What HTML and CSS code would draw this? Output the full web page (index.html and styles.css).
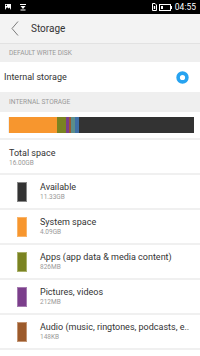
FILE: index.html
```html
<!DOCTYPE html>
<html>
<head>
<meta charset="utf-8">
<link rel="stylesheet" href="styles.css">
</head>
<body>
<div class="status">
  <div class="st-left">
    <svg width="6" height="6" viewBox="0 0 6 6"><rect x="0" y="0" width="6" height="6" fill="#fff"/><path d="M0 6 L2 3 L3.5 4.5 L4.5 3.5 L6 6 Z" fill="#000"/><rect x="0.8" y="0.8" width="1.2" height="1.2" fill="#000"/></svg>
    <svg width="6" height="7" viewBox="0 0 6 7"><path d="M0 0 H6 V1 H0 Z M0.5 2 L5.5 2 L3 5 Z M0.5 5.5 H5.5 V6.5 H0.5 Z" fill="#fff"/></svg>
  </div>
  <div class="st-right">
    <svg width="5" height="8" viewBox="0 0 5 8"><path d="M0.5 0.5 H3 L4.5 2 V7.5 H0.5 Z" fill="none" stroke="#fff" stroke-width="1"/><rect x="1.8" y="3" width="1.4" height="3" fill="#fff"/></svg>
    <svg width="13" height="7" viewBox="0 0 13 7"><rect x="0.5" y="0.5" width="11" height="6" fill="none" stroke="#fff" stroke-width="1"/><rect x="12" y="2" width="1" height="3" fill="#fff"/><rect x="2" y="2" width="2" height="3" fill="#fff"/></svg>
    <span class="time">04:55</span>
  </div>
</div>
<div class="header">
  <svg class="back" width="8" height="15" viewBox="0 0 8 15"><path d="M7 0.5 L1 7.5 L7 14.5" fill="none" stroke="#7a7a7a" stroke-width="1"/></svg>
  <span class="title">Storage</span>
</div>
<div class="section">DEFAULT WRITE DISK</div>
<div class="radio-row">
  <span class="label">Internal storage</span>
  <svg width="13" height="13" viewBox="0 0 13 13"><circle cx="6.5" cy="6.5" r="4.4" fill="#fff" stroke="#27a3f0" stroke-width="3.6"/></svg>
</div>
<div class="section sec2">INTERNAL STORAGE</div>
<div class="bar-row">
  <div class="bar">
    <div class="seg" style="width:48px;background:#f7962e"></div>
    <div class="seg" style="width:9px;background:#7a8321"></div>
    <div class="seg" style="width:3px;background:#7b3e8b"></div>
    <div class="seg" style="width:2px;background:#9c5a2b"></div>
    <div class="seg" style="width:4px;background:#5b8e8a"></div>
    <div class="seg" style="width:4px;background:#3f6fa6"></div>
    <div class="seg rest"></div>
  </div>
</div>
<div class="total">
  <div class="t1">Total space</div>
  <div class="t2">16.00GB</div>
</div>
<div class="item">
  <div class="swatch" style="background:#333333;border-color:#888"></div>
  <div class="txt"><div class="t1">Available</div><div class="t2">11.33GB</div></div>
</div>
<div class="item">
  <div class="swatch" style="background:#f7962e;border-color:#f9b46a"></div>
  <div class="txt"><div class="t1">System space</div><div class="t2">4.09GB</div></div>
</div>
<div class="item">
  <div class="swatch" style="background:#7a8321;border-color:#a9b06a"></div>
  <div class="txt"><div class="t1">Apps (app data &amp; media content)</div><div class="t2">826MB</div></div>
</div>
<div class="item">
  <div class="swatch" style="background:#7b3e8b;border-color:#a57cb0"></div>
  <div class="txt"><div class="t1">Pictures, videos</div><div class="t2">212MB</div></div>
</div>
<div class="item">
  <div class="swatch" style="background:#9c5a2b;border-color:#c39574"></div>
  <div class="txt"><div class="t1">Audio (music, ringtones, podcasts, e..</div><div class="t2">148KB</div></div>
</div>
</body>
</html>
```
FILE: styles.css
```css
html, body {
  margin: 0;
  padding: 0;
  background: #fff;
  font-family: Roboto, "Liberation Sans", sans-serif;
  width: 200px;
  height: 356px;
  overflow: hidden;
}
.status {
  height: 14px;
  background: #000;
  display: flex;
  align-items: center;
  justify-content: space-between;
  padding: 0 4px 0 5px;
}
.st-left {
  display: flex;
  align-items: center;
  gap: 9px;
}
.st-right {
  display: flex;
  align-items: center;
  gap: 2px;
}
.time {
  color: #fff;
  font-size: 8.5px;
  margin-left: 1px;
}
.header {
  background: #f3f3f3;
  border-bottom: 1px solid #e2e2e2;
  display: flex;
  align-items: center;
  padding-left: 11px;
  box-sizing: border-box;
  height: 30px;
}
.back { margin-right: 12px; }
.title {
  font-size: 10px;
  color: #333;
}
.section {
  height: 18px;
  background: #efefef;
  color: #999;
  font-size: 6.6px;
  display: flex;
  align-items: center;
  padding-left: 9px;
}
.sec2 { height: 20px; }
.radio-row {
  height: 30px;
  display: flex;
  align-items: center;
  justify-content: space-between;
  padding: 0 11px 0 4px;
}
.label {
  font-size: 9px;
  color: #333;
}
.bar-row {
  padding: 5px 6px 5px 8px;
  border-bottom: 2px solid #f0f0f0;
}
.bar {
  height: 16px;
  display: flex;
  border-left: 1px solid #f0f0f0;
}
.seg { height: 100%; }
.rest { flex: 1; background: #333; }
.total {
  height: 33px;
  padding: 2px 0 0 9px;
  box-sizing: border-box;
  border-bottom: 2px solid #f0f0f0;
  height: 35px;
  display: flex;
  flex-direction: column;
  justify-content: center;
}
.t1 {
  font-size: 9px;
  color: #333;
  line-height: 11px;
}
.t2 {
  font-size: 6.5px;
  color: #999;
  line-height: 9px;
}
.item {
  height: 33px;
  border-bottom: 2px solid #f0f0f0;
  display: flex;
  align-items: center;
  padding-left: 17px;
}
.swatch {
  width: 8px;
  height: 18px;
  border: 1px solid;
  margin-right: 13px;
}
.txt {
  display: flex;
  flex-direction: column;
  margin-top: 1px;
}
```
